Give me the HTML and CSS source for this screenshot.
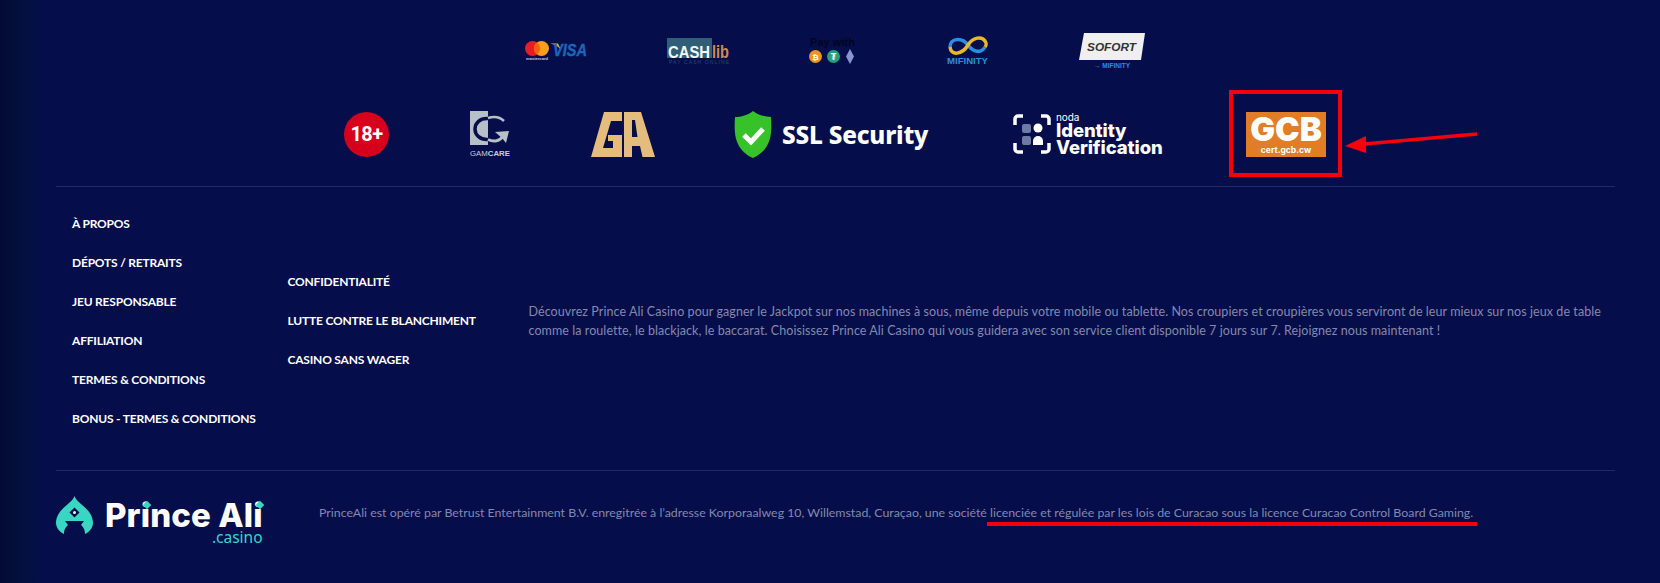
FILE: index.html
```html
<!DOCTYPE html>
<html lang="fr">
<head>
<meta charset="utf-8">
<title>Prince Ali Casino</title>
<link rel="stylesheet" href="styles.css">
</head>
<body>
<footer class="footer">
  <div class="payments">
    <svg class="pay pay-visa" viewBox="0 0 62 19">
      <circle cx="7.5" cy="7.5" r="7.5" fill="#ea1c24"/><circle cx="16.5" cy="7.5" r="7.5" fill="#f79e1b"/>
      <path d="M12 1.5a7.5 7.5 0 0 1 0 12a7.5 7.5 0 0 1 0-12z" fill="#ff5f00"/>
      <text x="1" y="18.5" class="t-mc" textLength="22" lengthAdjust="spacingAndGlyphs">mastercard</text>
      <path d="M25 2.5H33L36 9C33 5 29 3 25 2.5z" fill="#e8b23a"/>
      <text x="28" y="15" class="t-visa" textLength="34" lengthAdjust="spacingAndGlyphs">VISA</text>
    </svg>
    <svg class="pay pay-cash" viewBox="0 0 63 26">
      <rect x="0" y="0" width="45" height="20" fill="#2f5e76"/>
      <text x="1" y="20" class="t-cash" textLength="42" lengthAdjust="spacingAndGlyphs">CASH</text>
      <text x="45" y="20" class="t-lib" textLength="17" lengthAdjust="spacingAndGlyphs">lib</text>
      <text x="2" y="25.5" class="t-paycash" textLength="60">PAY CASH ONLINE</text>
    </svg>
    <svg class="pay pay-with" viewBox="0 0 49 27">
      <text x="1" y="9" class="t-with" textLength="45" lengthAdjust="spacingAndGlyphs">Pay with</text>
      <circle cx="6.5" cy="19.5" r="6.5" fill="#ee9322"/><text x="6.5" y="22.5" class="t-coin">₿</text>
      <circle cx="24.5" cy="19.5" r="6.5" fill="#26a17b"/><text x="24.5" y="22.5" class="t-coin">₮</text>
      <path d="M41 12l4 7.5-4 7.5-4-7.5z" fill="#8a94cf"/>
    </svg>
    <svg class="pay pay-mif" viewBox="0 0 41 27">
      <path d="M3 10C3 1 15 0 21 8C26 15 34 17 38 10" fill="none" stroke="#2a8fe0" stroke-width="3.5"/>
      <path d="M3 10C4 19 15 18 21 8C26 0 35 -1 38 4C40 7 39.5 8 38 10" fill="none" stroke="#e8b92c" stroke-width="3.5"/>
      <text x="0" y="27" class="t-mif" textLength="41" lengthAdjust="spacingAndGlyphs">MIFINITY</text>
    </svg>
    <svg class="pay pay-sof" viewBox="0 0 67 36">
      <path d="M5 0H66L62 27H0z" fill="#efefef"/>
      <text x="8" y="18" class="t-sof" textLength="49" lengthAdjust="spacingAndGlyphs">SOFORT</text>
      <text x="15" y="35" class="t-sofm" textLength="36" lengthAdjust="spacingAndGlyphs">→ MIFINITY</text>
    </svg>
  </div>

  <div class="trust">
    <div class="age">18+</div>
    <svg class="logo-gam" viewBox="0 0 40 46">
      <rect x="0" y="0" width="18" height="34" fill="#b8c0c7"/>
      <path d="M18 7.5C10 7 5 12 5 18C5 24 10 29 18 28.5" fill="none" stroke="#050e4b" stroke-width="3.5"/>
      <path d="M18 7C24 5 30 6 34 10" fill="none" stroke="#b8c0c7" stroke-width="2.5"/>
      <path d="M18 28.5C24 31.5 30 30 33 25" fill="none" stroke="#b8c0c7" stroke-width="3"/>
      <path d="M25 21L39 20L36 32L32 27z" fill="#b8c0c7"/>
      <text x="20" y="45" class="t-gam" textLength="40" lengthAdjust="spacingAndGlyphs">GAM<tspan class="t-gam-b">CARE</tspan></text>
    </svg>
    <svg class="logo-ga" viewBox="0 0 64 45">
      <path d="M0 45L13 0H31V9H20L12 36H22V29H17V23H31V45z" fill="#e4bd7c"/>
      <path d="M33 0H50L64 45H51.5L49 34H41V45H33zM41 8V25H46.5L44 8z" fill="#e4bd7c" fill-rule="evenodd"/>
    </svg>
    <div class="ssl">
      <svg class="ssl-shield" viewBox="0 0 38 47">
        <path d="M19 0C24 4 31 6 37 6C38 22 38 38 19 47C0 38 0 22 1 6C7 6 14 4 19 0z" fill="#38c22a"/>
        <path d="M10 24l7 7 12-13" fill="none" stroke="#fff" stroke-width="5"/>
      </svg>
      <span class="ssl-text">SSL Security</span>
    </div>
    <div class="noda">
      <svg class="noda-icon" viewBox="0 0 38 40">
        <path d="M2 11V5a3 3 0 0 1 3-3h5M28 2h5a3 3 0 0 1 3 3v6M36 29v6a3 3 0 0 1-3 3h-5M10 38H5a3 3 0 0 1-3-3v-6" fill="none" stroke="#fff" stroke-width="3.5"/>
        <rect x="9" y="10" width="9" height="9" rx="2" fill="#6f7aa3"/><rect x="9" y="22" width="9" height="9" rx="2" fill="#6f7aa3"/>
        <circle cx="25" cy="14" r="4.5" fill="#fff"/><path d="M20 31v-4a5 5 0 0 1 10 0v4z" fill="#fff"/>
      </svg>
      <div class="noda-text"><span class="noda-small">noda</span><span>Identity</span><span>Verification</span></div>
    </div>
    <div class="gcb"><span class="gcb-big">GCB</span><span class="gcb-small">cert.gcb.cw</span></div>
  </div>

  <div class="links">
    <ul class="menu menu-first">
      <li>À PROPOS</li>
      <li>DÉPOTS / RETRAITS</li>
      <li>JEU RESPONSABLE</li>
      <li>AFFILIATION</li>
      <li>TERMES &amp; CONDITIONS</li>
      <li>BONUS - TERMES &amp; CONDITIONS</li>
    </ul>
    <ul class="menu menu-second">
      <li>CONFIDENTIALITÉ</li>
      <li>LUTTE CONTRE LE BLANCHIMENT</li>
      <li>CASINO SANS WAGER</li>
    </ul>
    <p class="about">Découvrez Prince Ali Casino pour gagner le Jackpot sur nos machines à sous, même depuis votre mobile ou tablette. Nos croupiers et croupières vous serviront de leur mieux sur nos jeux de table comme la roulette, le blackjack, le baccarat. Choisissez Prince Ali Casino qui vous guidera avec son service client disponible 7 jours sur 7. Rejoignez nous maintenant !</p>
  </div>

  <div class="bottom">
    <div class="brand">
      <svg class="brand-icon" viewBox="0 0 37 38">
        <path d="M18.5 0C21 8 37 13 37 27C37 32 33 36 29 38C29 33 27 31 25 29L28 25H9L12 29C10 31 8 33 8 38C4 36 0 32 0 27C0 13 16 8 18.5 0z" fill="#38d6c3"/>
        <path d="M18.5 11.5l5 5-5 5-5-5z" fill="#050e4b"/>
        <circle cx="18.5" cy="16.5" r="1.5" fill="#dff"/>
      </svg>
      <div class="brand-text">
        <span class="brand-name">Prince Ali</span>
        <span class="brand-dot brand-dot-first"></span>
        <span class="brand-dot brand-dot-last"></span>
        <span class="brand-tld">.casino</span>
      </div>
    </div>
    <p class="legal">PrinceAli est opéré par Betrust Entertainment B.V. enregitrée à l’adresse Korporaalweg 10, Willemstad, Curaçao, une société licenciée et régulée par les lois de Curacao sous la licence Curacao Control Board Gaming.</p>
  </div>

  <div class="mark-box"></div>
  <svg class="mark-arrow" viewBox="0 0 134 30"><path d="M133 5L20 15" stroke="#f5000c" stroke-width="3.5"/><path d="M1 17L22 7V24z" fill="#f5000c"/></svg>
  <div class="mark-line"></div>
</footer>
</body>
</html>
```
FILE: styles.css
```css
* { box-sizing: border-box; }
html, body { margin: 0; height: 100%; }
body {
  background: #050e4b;
  overflow: hidden;
}
.footer {
  position: relative;
  height: 583px;
  padding: 32px 45px 0 56px;
  background: linear-gradient(90deg, #020b33 0, #03103f 24px, #050e4b 44px);
  font-family: "Noto Sans", sans-serif;
}
.payments {
  height: 37px;
  display: flex;
  align-items: center;
  justify-content: center;
  gap: 80px;
}
.pay { display: block; flex: none; overflow: visible; }
.pay-visa { width: 62px; height: 19px; }
.pay-cash { width: 63px; height: 26px; }
.pay-with { width: 49px; height: 27px; margin-left: -1px; }
.pay-mif { width: 41px; height: 27px; margin-left: 9px; }
.pay-sof { width: 67px; height: 36px; margin-left: 11px; }
.t-mc { font: 700 3.6px "Liberation Sans", sans-serif; fill: #c8ccd8; }
.t-visa { font: italic 700 16.5px "Liberation Sans", sans-serif; fill: #1c66b8; stroke: #1c66b8; stroke-width: .4px; }
.t-cash { font: 700 16.5px "Liberation Sans", sans-serif; fill: #f3f6f8; }
.t-lib { font: 700 18px "Liberation Sans", sans-serif; fill: #d08a52; }
.t-paycash { font: 400 5px "Liberation Sans", sans-serif; fill: #24496e; }
.t-with { font: 700 10.5px "Liberation Sans", sans-serif; fill: #03051c; }
.t-coin { font: 700 8px "DejaVu Sans", sans-serif; fill: #fff; text-anchor: middle; }
.t-mif { font: 700 9.5px "Liberation Sans", sans-serif; fill: #2a8fe0; }
.t-sof { font: italic 700 11.5px "Liberation Sans", sans-serif; fill: #333; }
.t-sofm { font: 700 7px "Liberation Sans", sans-serif; fill: #2a8fe0; }
.t-gam { font: 400 7px "Liberation Sans", sans-serif; fill: #c9cfd6; text-anchor: middle; }
.t-gam-b { font-weight: 700; }

.trust {
  margin-top: 41px;
  height: 48px;
  display: flex;
  align-items: center;
  justify-content: center;
  gap: 81px;
  padding-right: 1px;
}
.age {
  flex: none;
  width: 45px;
  height: 45px;
  border-radius: 50%;
  background: #d6001c;
  color: #fff;
  font: 700 20px/45px "Roboto", sans-serif;
  letter-spacing: -.6px;
  text-align: center;
}
.logo-gam { flex: none; width: 40px; height: 46px; }
.logo-ga { flex: none; width: 64px; height: 45px; }
.ssl { flex: none; display: flex; align-items: center; gap: 10px; width: 198px; margin-left: -2px; }
.ssl-shield { flex: none; width: 38px; height: 47px; }
.ssl-text { color: #fff; font: 800 24.3px "Noto Sans", sans-serif; white-space: nowrap; letter-spacing: -.2px; }
.noda { flex: none; display: flex; align-items: center; gap: 5px; width: 152px; }
.noda-icon { flex: none; width: 38px; height: 40px; }
.noda-text { display: flex; flex-direction: column; color: #fff; font: 800 18.5px/17px "Inter", sans-serif; white-space: nowrap; letter-spacing: -.1px; }
.noda-small { font-weight: 400; font-size: 10px; line-height: 9px; }
.gcb {
  flex: none;
  width: 80px;
  height: 45px;
  background: #e27d27;
  color: #fff;
  display: flex;
  flex-direction: column;
  align-items: center;
  font-family: "Inter", sans-serif;
}
.gcb-big { font-size: 33px; font-weight: 900; line-height: 32px; margin-top: 1px; }
.gcb-small { font-size: 8.5px; line-height: 10px; font-weight: 700; }

.links {
  margin-top: 28px;
  border-top: 1px solid #1f2a66;
  border-bottom: 1px solid #1f2a66;
  padding: 16px 0 32px 16px;
  height: 285px;
  display: flex;
  align-items: center;
}
.menu {
  flex: none;
  list-style: none;
  margin: 0;
  padding: 0;
  color: #fff;
  font-family: "Lato", sans-serif;
  font-weight: 700;
  font-size: 12px;
  letter-spacing: -.2px;
  line-height: 39px;
  white-space: nowrap;
}
.menu-first { width: 215.5px; }
.menu-second { width: 241px; }
.about {
  flex: 1;
  margin: 0;
  color: #8489ad;
  font-family: "Lato", sans-serif;
  font-size: 12.5px;
  letter-spacing: .07px;
  line-height: 19px;
}
.bottom {
  display: flex;
  align-items: flex-start;
  padding-top: 24px;
}
.brand { flex: none; width: 263px; display: flex; align-items: flex-start; gap: 12px; }
.brand-icon { flex: none; width: 37px; height: 38px; margin-top: 1px; }
.brand-text { position: relative; display: flex; flex-direction: column; align-items: flex-end; color: #fff; margin-top: 3px; }
.brand-name { font: 800 33px/34px "Inter", sans-serif; letter-spacing: .1px; white-space: nowrap; }
.brand-dot {
  position: absolute;
  top: 4px;
  width: 6px;
  height: 6px;
  background: #38d6c3;
  transform: rotate(45deg);
}
.brand-dot-first { left: 39px; }
.brand-dot-last { right: 0; }
.brand-tld { font: 400 15.5px/15px "Noto Sans", sans-serif; color: #38d6c3; margin-top: -2px; }
.legal {
  margin: 9px 0 0;
  flex: none;
  color: #8489ad;
  font-family: "Lato", sans-serif;
  font-size: 12.35px;
  line-height: 17px;
  white-space: nowrap;
}
.mark-box {
  position: absolute;
  left: 1229px;
  top: 90px;
  width: 113px;
  height: 87px;
  border: 4px solid #f5000c;
}
.mark-arrow {
  position: absolute;
  left: 1344px;
  top: 129px;
  width: 134px;
  height: 30px;
}
.mark-line {
  position: absolute;
  left: 987px;
  top: 522px;
  width: 490px;
  height: 4px;
  background: #f5000c;
}
```
